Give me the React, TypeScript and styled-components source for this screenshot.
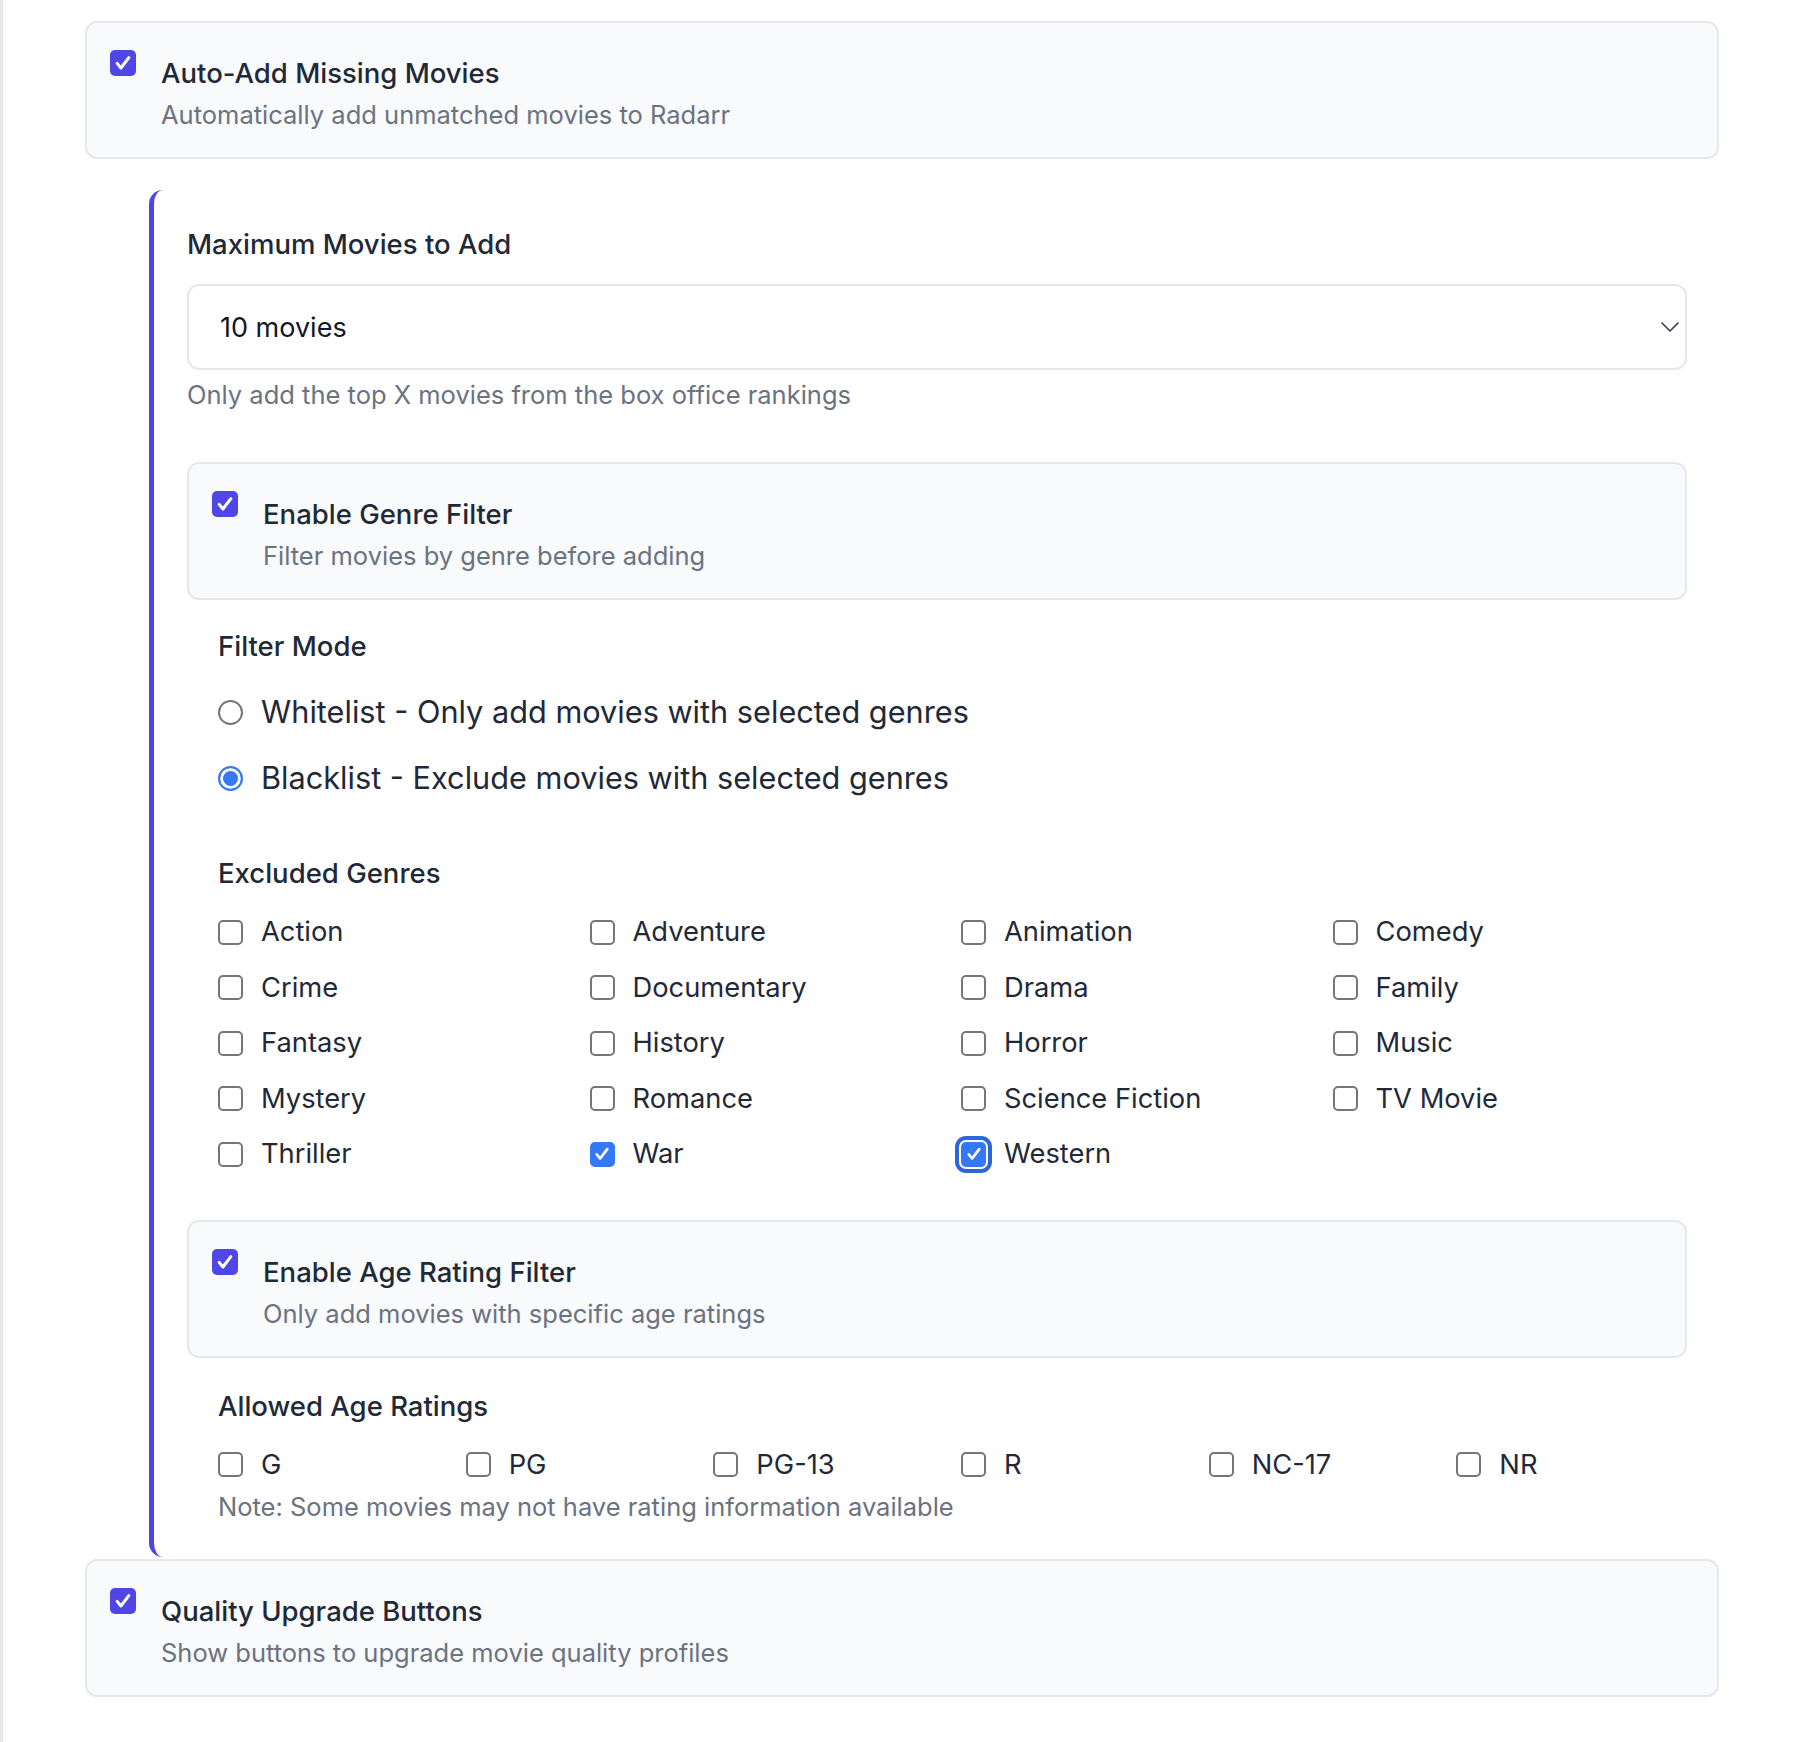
import React from "react";
import styled, { createGlobalStyle, css } from "styled-components";

const GlobalStyle = createGlobalStyle`
  html, body { margin: 0; padding: 0; background: #ffffff; }
  body {
    font-family: Inter, "Noto Sans", "Liberation Sans", sans-serif;
    color: #1f2937;
    -webkit-font-smoothing: antialiased;
  }
  * { box-sizing: border-box; }
`;

const Page = styled.div`
  min-height: 1742px;
  border-left: 3px solid #e5e7eb;
  padding: 21px 81px 40px 82px;
`;

const ToggleCard = styled.div<{ $mt?: number }>`
  display: flex;
  align-items: flex-start;
  gap: 25px;
  margin-top: ${(p) => p.$mt ?? 0}px;
  background: #f9fafb;
  border: 2px solid #e5e7eb;
  border-radius: 12px;
  padding: 27px 23px 23px;
`;

const BrandBox = styled.span`
  flex: none;
  width: 26px;
  height: 26px;
  border-radius: 5px;
  background: #4f46e5;
  display: flex;
  align-items: center;
  justify-content: center;
`;

const CardText = styled.div`
  padding-top: 3px;
  display: flex;
  flex-direction: column;
  gap: 3px;
`;

const CardTitle = styled.div`
  font-size: 27.5px;
  line-height: 40px;
  font-weight: 500;
  color: #1f2937;
`;

const CardDesc = styled.div`
  font-size: 25.5px;
  line-height: 38px;
  color: #6b7280;
`;

const Nested = styled.div`
  margin: 31px 0 2px 64px;
  border-left: 5px solid #4f46e5;
  border-radius: 14px 0 0 14px;
  padding: 34px 32px 31px 33px;
`;

const FieldLabel = styled.div<{ $mb?: number }>`
  font-size: 27.5px;
  line-height: 40px;
  font-weight: 500;
  color: #1f2937;
  margin-bottom: ${(p) => p.$mb ?? 19}px;
`;

const SelectBox = styled.div`
  height: 86px;
  border: 2px solid #e5e7eb;
  border-radius: 12px;
  background: #ffffff;
  padding: 0 5px 0 31px;
  display: flex;
  align-items: center;
  justify-content: space-between;
  font-size: 27px;
  color: #111827;
`;

const Helper = styled.div<{ $mt?: number }>`
  margin-top: ${(p) => p.$mt ?? 6}px;
  font-size: 25.5px;
  line-height: 38px;
  color: #6b7280;
`;

const SubBlock = styled.div<{ $mt: number }>`
  margin-top: ${(p) => p.$mt}px;
  padding-left: 31px;
`;

const RadioList = styled.div`
  display: flex;
  flex-direction: column;
  gap: 20px;
`;

const OptionRow = styled.label<{ $big?: boolean }>`
  display: flex;
  align-items: center;
  gap: 18px;
  font-size: ${(p) => (p.$big ? 30.7 : 27.3)}px;
  line-height: ${(p) => (p.$big ? 46 : 40.5)}px;
  color: #1f2937;
  white-space: nowrap;
`;

const RadioDot = styled.span<{ $on?: boolean }>`
  flex: none;
  width: 25px;
  height: 25px;
  border-radius: 50%;
  background: #ffffff;
  border: 2px solid #767676;
  ${(p) =>
    p.$on &&
    css`
      border-color: #3478f6;
      background: #3478f6;
      box-shadow: inset 0 0 0 3px #ffffff;
    `}
`;

const Box = styled.span<{ $on?: boolean; $focus?: boolean }>`
  flex: none;
  width: 25px;
  height: 25px;
  border-radius: 5px;
  border: 2px solid #767676;
  background: #ffffff;
  display: flex;
  align-items: center;
  justify-content: center;
  ${(p) =>
    p.$on &&
    css`
      border: none;
      background: #3478f6;
    `}
  ${(p) =>
    p.$focus &&
    css`
      box-shadow: 0 0 0 2px #ffffff, 0 0 0 6px #2d66dc;
    `}
`;

const Grid = styled.div<{ $cols: number }>`
  display: grid;
  grid-template-columns: repeat(${(p) => p.$cols}, 1fr);
  column-gap: 17px;
  row-gap: 15px;
`;

const Check = ({ size = 20 }: { size?: number }) => (
  <svg width={size} height={size} viewBox="0 0 24 24" fill="none">
    <path
      d="M5 12.5l4.5 5.5L19 5.5"
      stroke="#ffffff"
      strokeWidth="3.6"
      strokeLinecap="round"
      strokeLinejoin="round"
    />
  </svg>
);

const Chevron = () => (
  <svg width="20" height="20" viewBox="0 0 20 20" fill="none">
    <path d="M2 6l8 8 8-8" stroke="#374151" strokeWidth="1.7" strokeLinecap="round" strokeLinejoin="round" />
  </svg>
);

const Toggle = ({ title, desc, mt }: { title: string; desc: string; mt?: number }) => (
  <ToggleCard $mt={mt}>
    <BrandBox>
      <Check />
    </BrandBox>
    <CardText>
      <CardTitle>{title}</CardTitle>
      <CardDesc>{desc}</CardDesc>
    </CardText>
  </ToggleCard>
);

const genres = [
  "Action", "Adventure", "Animation", "Comedy",
  "Crime", "Documentary", "Drama", "Family",
  "Fantasy", "History", "Horror", "Music",
  "Mystery", "Romance", "Science Fiction", "TV Movie",
  "Thriller", "War", "Western",
];
const checkedGenres = ["War", "Western"];
const ratings = ["G", "PG", "PG-13", "R", "NC-17", "NR"];

export default function App() {
  return (
    <>
      <GlobalStyle />
      <Page>
        <Toggle title="Auto-Add Missing Movies" desc="Automatically add unmatched movies to Radarr" />
        <Nested>
          <FieldLabel $mb={20}>Maximum Movies to Add</FieldLabel>
          <SelectBox>
            <span>10 movies</span>
            <Chevron />
          </SelectBox>
          <Helper>Only add the top X movies from the box office rankings</Helper>

          <Toggle mt={48} title="Enable Genre Filter" desc="Filter movies by genre before adding" />

          <SubBlock $mt={26}>
            <FieldLabel $mb={23}>Filter Mode</FieldLabel>
            <RadioList>
              <OptionRow $big>
                <RadioDot />
                Whitelist - Only add movies with selected genres
              </OptionRow>
              <OptionRow $big>
                <RadioDot $on />
                Blacklist - Exclude movies with selected genres
              </OptionRow>
            </RadioList>
          </SubBlock>

          <SubBlock $mt={52}>
            <FieldLabel>Excluded Genres</FieldLabel>
            <Grid $cols={4}>
              {genres.map((g) => {
                const on = checkedGenres.includes(g);
                return (
                  <OptionRow key={g}>
                    <Box $on={on} $focus={g === "Western"}>
                      {on && <Check size={18} />}
                    </Box>
                    {g}
                  </OptionRow>
                );
              })}
            </Grid>
          </SubBlock>

          <Toggle mt={45} title="Enable Age Rating Filter" desc="Only add movies with specific age ratings" />

          <SubBlock $mt={28}>
            <FieldLabel>Allowed Age Ratings</FieldLabel>
            <Grid $cols={6}>
              {ratings.map((r) => (
                <OptionRow key={r}>
                  <Box />
                  {r}
                </OptionRow>
              ))}
            </Grid>
            <Helper $mt={3}>Note: Some movies may not have rating information available</Helper>
          </SubBlock>
        </Nested>
        <Toggle title="Quality Upgrade Buttons" desc="Show buttons to upgrade movie quality profiles" />
      </Page>
    </>
  );
}
